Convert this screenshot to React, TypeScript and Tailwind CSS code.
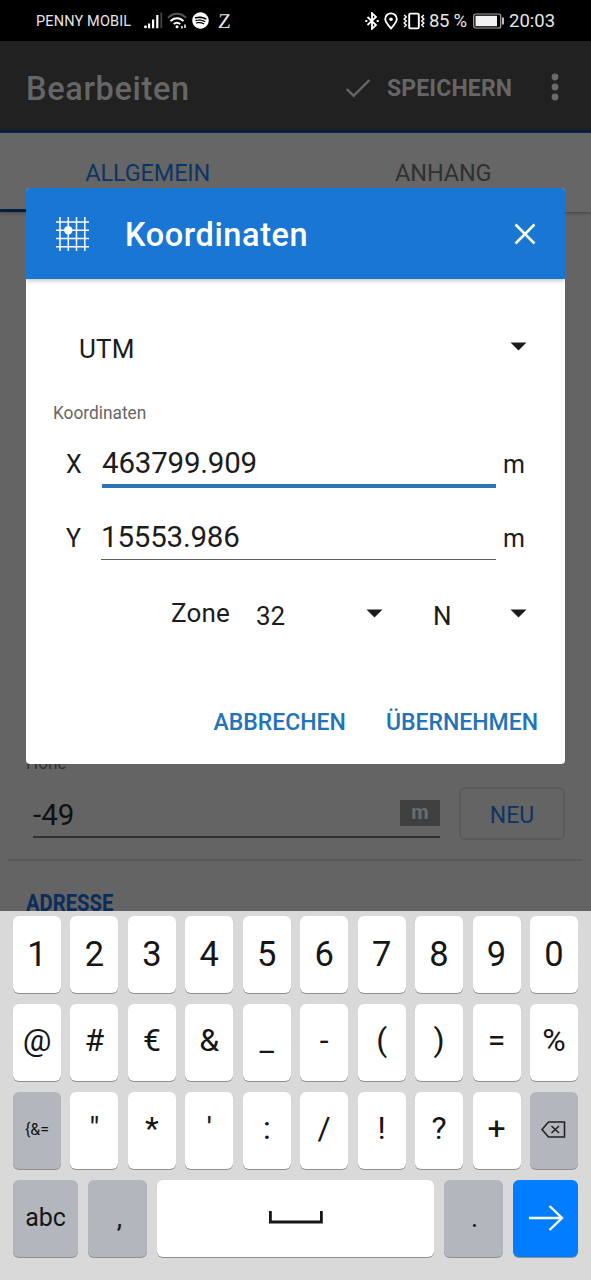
import { ReactNode } from "react";
import clsx from "clsx";
import { FaSpotify } from "react-icons/fa";

const digits = ["1", "2", "3", "4", "5", "6", "7", "8", "9", "0"];
const symbols = ["@", "#", "€", "&", "_", "-", "(", ")", "=", "%"];
const marks = ['"', "*", "'", ":", "/", "!", "?", "+"];

function Key({
  children,
  className = "w-12 bg-white text-[32px] pb-1.5",
}: {
  children: ReactNode;
  className?: string;
}) {
  return (
    <button
      type="button"
      className={clsx(
        "flex h-[77px] shrink-0 items-center justify-center rounded-[6px] leading-none text-[#161616] shadow-[0_1px_0_0_#8f8f8f]",
        className,
      )}
    >
      {children}
    </button>
  );
}

function Caret() {
  return (
    <svg viewBox="0 0 17 9" className="h-[9px] w-[17px] shrink-0 fill-[#1c1c1c]">
      <path d="M0.5 0.5h16L8.5 8.5z" />
    </svg>
  );
}

function StatusBar() {
  return (
    <div className="flex h-[41px] items-center bg-black pl-9 leading-none text-[#e6e6e6]">
      <span className="w-[108px] shrink-0 pt-[3px] text-[14.5px] tracking-[0.15px]">
        PENNY MOBIL
      </span>
      <svg viewBox="0 0 20 18" className="h-[18px] w-5 shrink-0 fill-white">
        <circle cx="1.5" cy="14.8" r="1.5" />
        <path d="M4 11.5h2.2v4.8H4zM8 7.5h2.2v8.8H8zM12.2 3h2.2v13.3h-2.2z" />
        <path d="M16.4 0.5h1.8v15.8h-1.8z" fill="#444" />
      </svg>
      <svg
        viewBox="0 0 20 18"
        className="ml-[3px] h-[18px] w-5 shrink-0 fill-none stroke-white stroke-2"
      >
        <path d="M1 5.8C6 0.3 14 0.3 19 5.8" stroke="#555" />
        <path d="M3.5 9.2C7 5.2 13 5.2 16.5 9.2" />
        <path d="M6.8 12.2c1.7-2 4.7-2 6.4 0" />
        <circle cx="10" cy="14.8" r="1.5" fill="white" stroke="none" />
        <path d="M15 14v2.5M18 12.5V16" strokeWidth="1.5" />
      </svg>
      <FaSpotify className="ml-[5px] size-[17px] shrink-0 text-white" />
      <span className="ml-[9px] w-[147px] shrink-0 pt-0.5 font-['Liberation_Serif',serif] text-[21px]">
        <span className="inline-block -skew-x-3">Z</span>
      </span>
      <svg
        viewBox="0 0 14 18"
        className="h-[18px] w-3.5 shrink-0 fill-none stroke-white stroke-[1.8]"
      >
        <path d="M2.5 5l8.5 8-4 3.8V1.2L11 5l-8.5 8" />
        <path d="M0.3 9h2M11.7 9h2" />
      </svg>
      <svg
        viewBox="0 0 14 18"
        className="ml-[5px] h-[18px] w-3.5 shrink-0 fill-none stroke-white stroke-[1.8]"
      >
        <path d="M7 16.5C4.2 13 1.2 10.3 1.2 7.1a5.8 5.8 0 0 1 11.6 0c0 3.2-3 5.9-5.8 9.4z" />
        <circle cx="7" cy="7.2" r="1.8" fill="white" stroke="none" />
      </svg>
      <svg
        viewBox="0 0 22 18"
        className="ml-[5px] h-[18px] w-[22px] shrink-0 fill-none stroke-white"
      >
        <rect x="6.2" y="1.6" width="9.6" height="14.8" rx="1.2" strokeWidth="1.9" />
        <path
          d="M1.2 3l2 2-2 2 2 2-2 2 2 2-2 2M20.8 3l-2 2 2 2-2 2 2 2-2 2 2 2"
          strokeWidth="1.5"
        />
      </svg>
      <span className="ml-1 w-[44px] shrink-0 whitespace-nowrap pt-px text-[18.5px] tracking-[-0.3px]">
        85 %
      </span>
      <svg viewBox="0 0 32 16" className="h-4 w-8 shrink-0">
        <rect x="0.7" y="1" width="27" height="14" rx="2" fill="none" stroke="#aaa" strokeWidth="1.2" />
        <path d="M2.5 2.8h21.5v10.4H2.5z" fill="#f2f2f2" />
        <path d="M29.2 4.5h1.6v7h-1.6z" fill="#eee" />
      </svg>
      <span className="ml-1 pt-px text-[18.5px]">20:03</span>
    </div>
  );
}

function EditPage() {
  return (
    <div className="h-[870px] overflow-hidden bg-[#646464]">
      <header className="flex h-[92px] items-center border-b-[3px] border-[#061d3e] bg-[#212121] pl-[26px] pt-[5px] leading-none text-[#666]">
        <h1 className="w-[320px] shrink-0 pt-0.5 text-[32.5px] font-medium tracking-[0.65px]">
          Bearbeiten
        </h1>
        <svg
          viewBox="0 0 26 20"
          className="-ml-px h-5 w-[26px] fill-none stroke-[#666] stroke-[2.4]"
        >
          <path d="M1.8 11l6.8 6.8L24.5 2" />
        </svg>
        <span className="ml-4 w-[164px] shrink-0 text-[23px] font-bold tracking-[0.15px]">
          SPEICHERN
        </span>
        <svg viewBox="0 0 8 28" className="mb-0.5 h-7 w-2 fill-[#6a6a6a]">
          <circle cx="4" cy="4" r="3.4" />
          <circle cx="4" cy="14" r="3.4" />
          <circle cx="4" cy="24" r="3.4" />
        </svg>
      </header>
      <nav className="grid h-[79px] grid-cols-2 bg-[#666] text-center text-[23.5px] leading-[81px] tracking-[-0.15px] shadow-[0_1px_3px_#444]">
        <span className="h-[79px] border-b-[3px] border-[#04203f] text-[#0d3563]">
          ALLGEMEIN
        </span>
        <span className="h-[79px] text-[#303030]">ANHANG</span>
      </nav>
      <div className="mt-[532px] flex h-9 items-center pl-[26px] text-[19px] leading-none text-[#333]">
        <span className="origin-left scale-x-90">Höhe</span>
      </div>
      <div className="mt-[7px] flex h-[53px] items-stretch pl-[33px]">
        <div className="flex h-[51px] w-[407px] items-center justify-between border-b-2 border-[#323232] pt-[5px]">
          <span className="pt-[3px] text-[29.5px] leading-none text-[#101010]">
            -49
          </span>
          <span className="mb-[3px] h-[26px] w-10 bg-[#404040] text-center text-[20px] font-bold leading-[25px] text-[#6c6c6c]">
            m
          </span>
        </div>
        <button
          type="button"
          className="ml-[19px] w-[106px] rounded-[6px] border-2 border-[#5a5a5a] pt-[3px] text-[23px] leading-none text-[#0d3563]"
        >
          NEU
        </button>
      </div>
      <hr className="mx-2 mt-[19px] border-t-2 border-[#595959]" />
      <h2 className="ml-[26px] mt-[30px] origin-left scale-x-[0.86] text-[23.5px] font-bold leading-[25px] text-[#0c2c5c]">
        ADRESSE
      </h2>
    </div>
  );
}

function CoordinatesDialog() {
  return (
    <div className="absolute left-[26px] top-[188px] flex h-[576px] w-[539px] flex-col overflow-hidden rounded-[4px] bg-white leading-none text-[#1c1c1c]">
      <div className="flex h-[91px] shrink-0 items-center bg-[#1976d2] pl-[30px] pr-[29px] text-white shadow-[0_1px_5px_rgba(0,0,0,0.3)]">
        <svg viewBox="0 0 34 34" className="size-[34px] fill-none stroke-white">
          <path
            d="M4 0v34M12.3 0v34M20.5 0v34M28.8 0v34M0 5h33M0 13.2h33M0 21.5h33M0 29.8h33"
            strokeWidth="1.5"
          />
          <circle cx="12.3" cy="13.2" r="4.2" fill="white" stroke="none" />
        </svg>
        <h2 className="ml-[35px] flex-1 pt-1 text-[32.5px] font-medium tracking-[0.6px]">
          Koordinaten
        </h2>
        <svg
          viewBox="0 0 22 22"
          className="size-[22px] fill-none stroke-white stroke-[2.5]"
        >
          <path d="M1.5 1.5l19 19M20.5 1.5l-19 19" />
        </svg>
      </div>
      <div className="mt-[50px] flex h-10 items-center justify-between pl-[53px] pr-[38px] text-[26px]">
        <span className="tracking-[0.2px]">UTM</span>
        <div className="pb-1.5">
          <Caret />
        </div>
      </div>
      <label className="ml-[27px] mt-[34px] h-5 origin-left scale-x-[0.91] text-[19px] leading-5 text-[#666]">
        Koordinaten
      </label>
      <div className="mt-5 flex h-[45px] pl-10 text-[25px] leading-[39px]">
        <span className="w-9 pt-0.5">X</span>
        <div className="h-[45px] w-[394px] border-b-4 border-[#2b75b8] text-[29.5px] leading-[40px] tracking-[-0.2px]">
          463799.909
        </div>
        <span className="ml-[7px] pt-0.5">m</span>
      </div>
      <div className="mt-[29px] flex h-[43px] pl-10 text-[25px] leading-[39px]">
        <span className="w-[35px] pt-0.5">Y</span>
        <div className="h-[43px] w-[395px] border-b-[1.5px] border-[#606060] text-[29.5px] leading-[40px] tracking-[-0.2px]">
          15553.986
        </div>
        <span className="ml-[7px] pt-0.5">m</span>
      </div>
      <div className="mt-[35px] flex h-10 items-center pl-[145px] text-[26px]">
        <span className="mb-1 w-[85px] tracking-[0.2px]">Zone</span>
        <span className="w-[110px] pt-0.5">32</span>
        <div className="pb-1">
          <Caret />
        </div>
        <span className="ml-[50px] w-[77px] pt-0.5">N</span>
        <div className="pb-1">
          <Caret />
        </div>
      </div>
      <div className="mt-[76px] flex justify-end gap-10 pr-[27px] text-[23px] font-medium text-[#2273ba]">
        <button type="button">ABBRECHEN</button>
        <button type="button">ÜBERNEHMEN</button>
      </div>
    </div>
  );
}

function Keyboard() {
  return (
    <div className="flex h-[369px] flex-col gap-[11px] bg-[#d9d9d9] px-[13px] pt-[5px]">
      <div className="flex justify-between">
        {digits.map((d) => (
          <Key key={d} className="w-12 bg-white text-[34.5px]">
            {d}
          </Key>
        ))}
      </div>
      <div className="flex justify-between">
        {symbols.map((s) => (
          <Key key={s}>{s}</Key>
        ))}
      </div>
      <div className="flex justify-between">
        <Key className="w-12 bg-[#b3b7bd] pb-0.5 text-[16px]">{"{&="}</Key>
        {marks.map((m) => (
          <Key key={m}>{m}</Key>
        ))}
        <Key className="w-12 bg-[#b3b7bd] pb-0.5">
          <svg
            viewBox="0 0 25 17"
            className="h-[17px] w-[25px] fill-none stroke-[#222] stroke-[1.6]"
          >
            <path d="M1 8.5L7.5 1H23.5v15H7.5zM10.5 5l7.5 7M18 5l-7.5 7" />
          </svg>
        </Key>
      </div>
      <div className="flex justify-between">
        <Key className="w-[65px] bg-[#b3b7bd] pb-0.5 text-[25px]">abc</Key>
        <Key className="w-[59px] bg-[#b3b7bd] pl-1 text-[27px]">,</Key>
        <Key className="w-[277px] bg-white pb-0.5">
          <svg
            viewBox="0 0 54 13"
            className="h-[13px] w-[54px] fill-none stroke-[#161616] stroke-[2.8]"
          >
            <path d="M1.4 0v11h51V0" />
          </svg>
        </Key>
        <Key className="w-[59px] bg-[#b3b7bd] pl-0.5 text-[27px]">.</Key>
        <Key className="w-[65px] bg-[#007eff] pb-0.5">
          <svg
            viewBox="0 0 36 26"
            className="h-[26px] w-9 fill-none stroke-white stroke-[2.4]"
          >
            <path d="M1 13h33M21.5 1L34 13 21.5 25" />
          </svg>
        </Key>
      </div>
    </div>
  );
}

export default function App() {
  return (
    <div className="relative h-[1280px] w-[591px] overflow-hidden font-[Roboto,sans-serif]">
      <StatusBar />
      <EditPage />
      <Keyboard />
      <CoordinatesDialog />
    </div>
  );
}
